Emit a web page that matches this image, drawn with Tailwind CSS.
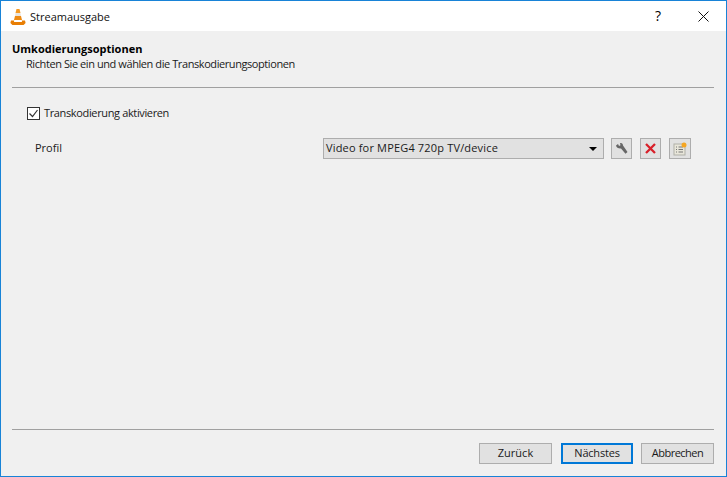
<!DOCTYPE html>
<html><head><script src="https://cdn.jsdelivr.net/npm/@tailwindcss/browser@4"></script></head>
<body class="bg-[#f0f0f0]">
<div class="w-[727px] h-[477px] flex flex-col border-x border-b border-[#1883d7] font-['Open_Sans',sans-serif] text-[11px] text-[#1a1a1a] overflow-hidden">
  <div class="h-[31px] shrink-0 bg-white flex items-center border-t border-[#1883d7]">
    <svg class="ml-[9px] w-[16px] h-[17px]" viewBox="0 0 16 17"><path d="M6.500 1h3l1 4h-5z" fill="#f59a23"/><path d="M5.600 5h4.800l.6 3H5z" fill="#e9e4dc"/><path d="M5 8h6l1 4H4z" fill="#ee8a12"/><path d="M1 12.500h3.200L4 14h8l-.2-1.500H15l.6 2.500-2 2H2.400L.4 15z" fill="#e87e04"/></svg>
    <span class="ml-[4px] text-[#111] leading-none">Streamausgabe</span>
    <span class="ml-auto mr-[37px] text-[14px] leading-none text-black">?</span>
    <svg class="mr-[17px] w-[11px] h-[11px]" viewBox="0 0 11 11"><path d="M.5.500l10 10M10.500.500l-10 10" stroke="#111" fill="none"/></svg>
  </div>
  <div class="flex-1 flex flex-col px-[11px]">
    <div class="pt-[11px] font-bold leading-[14px] text-black">Umkodierungsoptionen</div>
    <div class="pl-[14px] leading-[14px] mt-[1px] tracking-[-0.42px]">Richten Sie ein und wählen die Transkodierungsoptionen</div>
    <div class="mt-[16px] h-px bg-[#a0a0a0] mr-[1px]"></div>
    <label class="mt-[18px] ml-[15px] flex items-center gap-[4px] h-[14px]">
      <span class="w-[13px] h-[13px] bg-white border border-[#333] flex items-center justify-center"><svg class="w-[11px] h-[11px]" viewBox="0 0 11 11"><path d="M1.500 5.500l3 3 5-6.500" stroke="#333" stroke-width="1.200" fill="none"/></svg></span>
      <span class="tracking-[-0.36px]">Transkodierung aktivieren</span>
    </label>
    <div class="mt-[18px] flex items-center h-[21px]">
      <span class="ml-[23px] w-[288px]">Profil</span>
      <div class="w-[281px] h-[21px] bg-[#e1e1e1] border border-[#adadad] flex items-center pl-[2px] pr-[6px]"><span class="flex-1 tracking-[0.17px]">Video for MPEG4 720p TV/device</span><span class="w-0 h-0 border-x-[4px] border-t-[4px] border-x-transparent border-t-black"></span></div>
      <span class="ml-[7px] w-[21px] h-[21px] bg-[#e1e1e1] border border-[#adadad] flex items-center justify-center"><svg class="w-[13px] h-[13px]" viewBox="0 0 13 13"><path d="M1 3.500L3 2l1 2 1.500-.8L5 1.200C6.500.500 8 1.500 8 3.500l4.500 6.500-2 1.800L6 6.500C3.500 6.800 1.300 5.500 1 3.500z" fill="#666"/></svg></span>
      <span class="ml-[8px] w-[21px] h-[21px] bg-[#e1e1e1] border border-[#adadad] flex items-center justify-center"><svg class="w-[11px] h-[11px]" viewBox="0 0 11 11"><path d="M1 1l9 9M10 1l-9 9" stroke="#d8202a" stroke-width="2.300" fill="none"/></svg></span>
      <span class="ml-[8px] w-[22px] h-[21px] bg-[#e1e1e1] border border-[#adadad] flex items-center justify-center"><svg class="w-[14px] h-[14px]" viewBox="0 0 14 14"><rect x="1" y="2" width="11" height="11" fill="#e8e6da" stroke="#b0b0a8"/><path d="M3 5h1M3 7.500h1M3 10h1M5.500 5H10M5.500 7.500H10M5.500 10H10" stroke="#777"/><circle cx="11" cy="3" r="2.500" fill="#f5a623"/></svg></span>
    </div>
    <div class="mt-auto h-px bg-[#a0a0a0] mr-[1px]"></div>
    <div class="h-[46px] shrink-0 flex items-start justify-end pt-[13px] pr-[1px] gap-[8px]">
      <span class="mr-[1px] w-[73px] h-[21px] bg-[#e1e1e1] border border-[#adadad] flex items-center justify-center">Zurück</span>
      <span class="w-[72px] h-[21px] bg-[#e1e1e1] border-2 border-[#0078d7] flex items-center justify-center tracking-[-0.2px]">Nächstes</span>
      <span class="w-[73px] h-[21px] bg-[#e1e1e1] border border-[#adadad] flex items-center justify-center tracking-[-0.5px]">Abbrechen</span>
    </div>
  </div>
</div>
</body></html>
